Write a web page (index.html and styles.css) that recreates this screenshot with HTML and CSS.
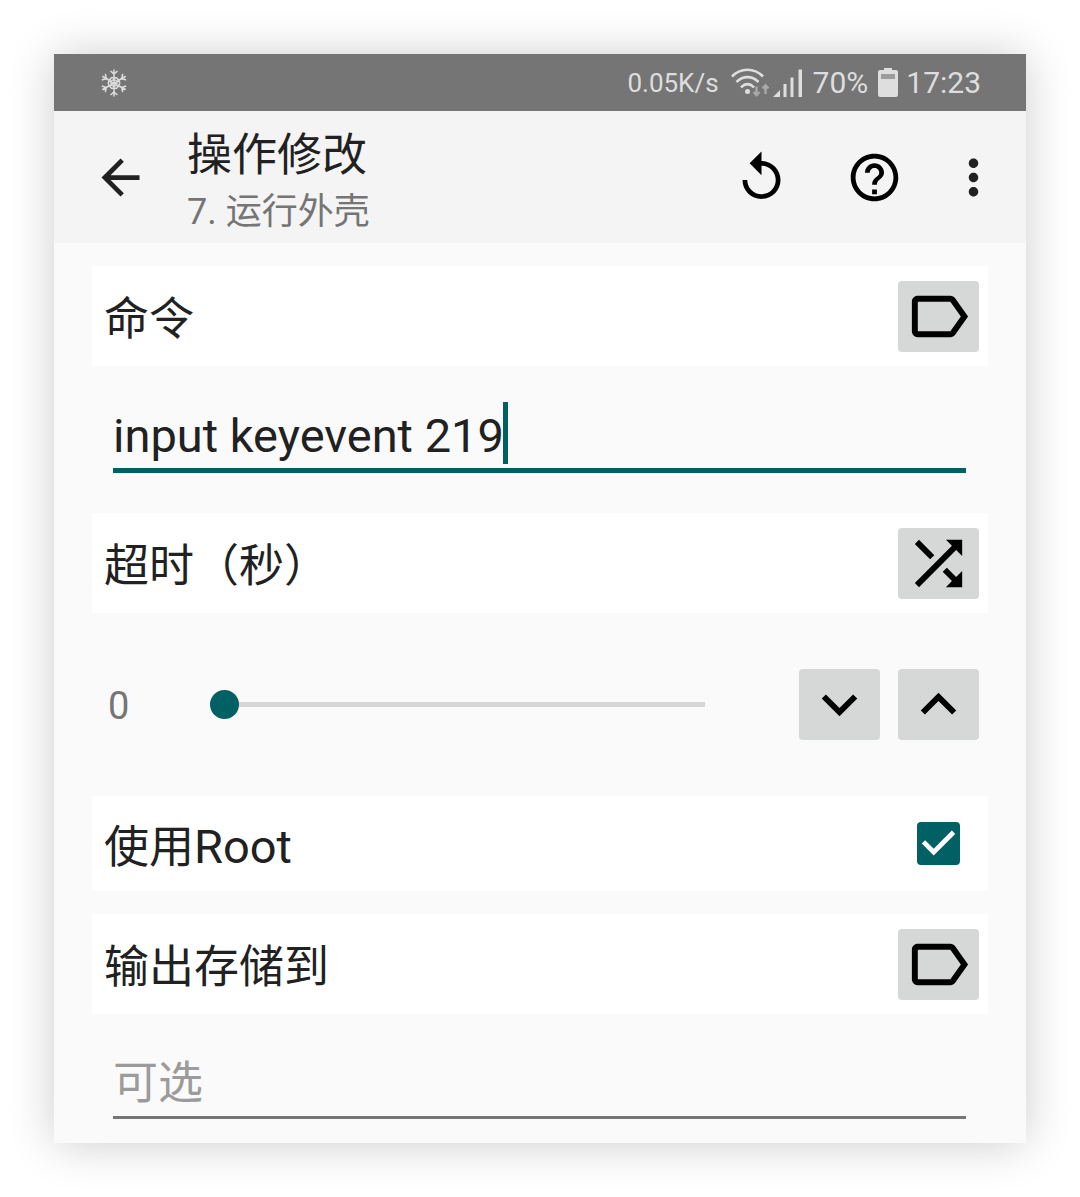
FILE: index.html
```html
<!DOCTYPE html>
<html lang="zh-CN">
<head>
<meta charset="utf-8">
<meta name="viewport" content="width=device-width, initial-scale=1">
<title>操作修改</title>
<link rel="stylesheet" href="styles.css">
</head>
<body>
<main class="screen">
  <div class="status">
    <svg class="snow" viewBox="-14 -14 28 28" aria-hidden="true">
      <defs>
        <g id="arm"><path d="M0 0V-13.500M-3.500 -12L0 -9L3.500 -12M-3 -5.200H3M-1.700 -3H1.700"/></g>
      </defs>
      <use href="#arm"/><use href="#arm" transform="rotate(60)"/><use href="#arm" transform="rotate(120)"/>
      <use href="#arm" transform="rotate(180)"/><use href="#arm" transform="rotate(240)"/><use href="#arm" transform="rotate(300)"/>
    </svg>
    <span class="speed">0.05K/s</span>
    <svg class="wifi" viewBox="0 0 38 30" aria-hidden="true">
      <g fill="none" stroke="#dedede" stroke-width="2.600">
        <path d="M1 8.500C10 -0.500 23 -0.500 32 8.500"/><path d="M5.500 14C12 7.500 21 7.500 27.500 14"/><path d="M10 19.500C14 15 19 15 23 19.500"/>
      </g>
      <circle cx="16.500" cy="23.500" r="2.500" fill="#dedede"/>
      <g fill="none" stroke="#a9a9a9" stroke-width="2.400"><path d="M25.500 18.500V27M22.500 24L25.500 27.300L28.500 24"/><path d="M34.500 26V17.500M31.500 20.500L34.500 17.200L37.500 20.500"/></g>
    </svg>
    <svg class="signal" viewBox="0 0 30 30" aria-hidden="true">
      <path fill="#dedede" d="M0 29L7 22V29ZM10.500 16H13.500V29H10.500ZM17.500 9.500H20.500V29H17.500ZM25.500 1.500H29V29H25.500Z"/>
    </svg>
    <span class="percent">70%</span>
    <svg class="battery" viewBox="0 0 20 30" aria-hidden="true">
      <path fill="#dedede" d="M6 0H14V2H18a2 2 0 0 1 2 2V27a2 2 0 0 1-2 2H2a2 2 0 0 1-2-2V4a2 2 0 0 1 2-2H6Z"/>
      <path fill="#9c9c9c" d="M3 6H17V11H3Z"/>
    </svg>
    <time class="clock">17:23</time>
  </div>

  <header class="bar">
    <button class="icon-button" type="button" aria-label="返回">
      <svg class="icon soft" viewBox="0 0 24 24"><path d="M20 11H7.830l5.590-5.590L12 4l-8 8 8 8 1.410-1.410L7.830 13H20v-2z"/></svg>
    </button>
    <div class="titles">
      <h1 class="title">操作修改</h1>
      <p class="subtitle">7. 运行外壳</p>
    </div>
    <div class="actions">
      <button class="icon-button" type="button" aria-label="还原">
        <svg class="icon" viewBox="0 0 24 24"><path d="M12 5V1L7 6l5 5V7c3.310 0 6 2.690 6 6s-2.690 6-6 6-6-2.690-6-6H4c0 4.420 3.580 8 8 8s8-3.580 8-8-3.580-8-8-8z"/></svg>
      </button>
      <button class="icon-button" type="button" aria-label="帮助">
        <svg class="icon" viewBox="0 0 24 24"><path d="M11 17h2v2h-2v-2zm1-15C6.480 2 2 6.480 2 12s4.480 10 10 10 10-4.480 10-10S17.520 2 12 2zm0 18c-4.410 0-8-3.590-8-8s3.590-8 8-8 8 3.590 8 8-3.590 8-8 8zm0-14c-2.210 0-4 1.790-4 4h2c0-1.100.900-2 2-2s2 .900 2 2c0 2-3 1.750-3 5h2c0-2.250 3-2.500 3-5 0-2.210-1.790-4-4-4z"/></svg>
      </button>
      <button class="icon-button more" type="button" aria-label="更多">
        <svg class="icon soft" viewBox="0 0 24 24"><path d="M12 8c1.100 0 2-.900 2-2s-.900-2-2-2-2 .900-2 2 .900 2 2 2zm0 2c-1.100 0-2 .900-2 2s.900 2 2 2 2-.900 2-2-.900-2-2-2zm0 6c-1.100 0-2 .900-2 2s.900 2 2 2 2-.900 2-2-.900-2-2-2z"/></svg>
      </button>
    </div>
  </header>

  <form class="form">
    <div class="row">
      <label class="label" for="command">命令</label>
      <button class="tile" type="button" aria-label="插入标签">
        <svg class="tile-icon" viewBox="0 0 24 24"><path d="M17.630 5.840C17.270 5.330 16.670 5 16 5L5 5.010C3.900 5.010 3 5.900 3 7v10c0 1.100.900 1.990 2 1.990L16 19c.670 0 1.270-.330 1.630-.840L22 12l-4.370-6.160zM16 17H5V7h11l3.550 5L16 17z"/></svg>
      </button>
    </div>
    <div class="field">
      <input class="text active" id="command" type="text" value="input keyevent 219">
      <span class="caret"></span>
    </div>

    <div class="row">
      <label class="label" for="timeout">超时（秒）</label>
      <button class="tile" type="button" aria-label="切换">
        <svg class="tile-icon" viewBox="0 0 24 24"><path d="M10.590 9.170L5.410 4 4 5.410l5.170 5.170 1.420-1.410zM14.500 4l2.040 2.040L4 18.590 5.410 20 17.960 7.460 20 9.500V4h-5.500zm.330 9.410l-1.410 1.410 3.130 3.130L14.500 20H20v-5.500l-2.040 2.040-3.130-3.130z"/></svg>
      </button>
    </div>
    <div class="slider-row">
      <output class="value" for="timeout">0</output>
      <input class="slider" id="timeout" type="range" min="0" max="100" value="0">
      <div class="steps">
        <button class="tile" type="button" aria-label="减少">
          <svg class="tile-icon" viewBox="0 0 24 24"><path d="M16.590 8.590L12 13.170 7.410 8.590 6 10l6 6 6-6z"/></svg>
        </button>
        <button class="tile" type="button" aria-label="增加">
          <svg class="tile-icon" viewBox="0 0 24 24"><path d="M12 8l-6 6 1.410 1.410L12 10.830l4.590 4.580L18 14z"/></svg>
        </button>
      </div>
    </div>

    <div class="row check-row">
      <label class="label" for="root">使用<span class="latin">Root</span></label>
      <span class="check-wrap">
        <input class="check" id="root" type="checkbox" checked>
        <svg class="tick" viewBox="3 3 18 18" aria-hidden="true"><path d="M10 17l-5-5 1.410-1.410L10 14.170l7.590-7.590L19 8l-9 9z"/></svg>
      </span>
    </div>

    <div class="row">
      <label class="label" for="output">输出存储到</label>
      <button class="tile" type="button" aria-label="选择变量">
        <svg class="tile-icon" viewBox="0 0 24 24"><path d="M17.630 5.840C17.270 5.330 16.670 5 16 5L5 5.010C3.900 5.010 3 5.900 3 7v10c0 1.100.900 1.990 2 1.990L16 19c.670 0 1.270-.330 1.630-.840L22 12l-4.370-6.160zM16 17H5V7h11l3.550 5L16 17z"/></svg>
      </button>
    </div>
    <div class="field last">
      <input class="text" id="output" type="text" placeholder="可选">
    </div>
  </form>
</main>
</body>
</html>
```
FILE: styles.css
```css
* {
  box-sizing: border-box;
}

body {
  margin: 0;
  padding: 54px;
  background: #fff;
  color: #212121;
  font-family: Roboto, "Noto Sans CJK SC", sans-serif;
}

button {
  margin: 0;
  padding: 0;
  border: 0;
  background: none;
}

svg {
  display: block;
}

.screen {
  background: #fafafa;
  box-shadow: 0 1px 44px rgba(0, 0, 0, 0.2);
}

/* Status bar */
.status {
  display: flex;
  align-items: center;
  height: 57px;
  padding: 0 45px 0 46px;
  background: #757575;
  color: #dedede;
  font-size: 30px;
  line-height: 57px;
}

.snow {
  width: 28px;
  height: 28px;
  margin-right: auto;
  fill: none;
  stroke: #dedede;
  stroke-width: 1.5;
}

.speed {
  padding-top: 2px;
  font-size: 26px;
}

.wifi {
  width: 38px;
  height: 30px;
  margin-left: 12px;
}

.signal {
  width: 30px;
  height: 30px;
  margin-left: 4px;
}

.percent {
  margin-left: 10px;
}

.battery {
  width: 20px;
  height: 30px;
  margin: 0 8px 0 10px;
}

/* App bar */
.bar {
  display: flex;
  align-items: center;
  min-height: 132px;
  padding: 0 24px 0 38px;
  background: #f4f4f4;
}

.icon-button,
.icon {
  width: 57px;
  height: 57px;
}

.icon {
  fill: #000;
}

.soft {
  fill: #212121;
}

.titles {
  flex: 1;
  margin-left: 38px;
  padding-top: 9px;
}

.title,
.subtitle {
  margin: 0;
  font-weight: 400;
}

.title {
  font-size: 45px;
  line-height: 60px;
}

.subtitle {
  color: #757575;
  font-size: 36px;
  line-height: 52px;
}

.actions {
  display: flex;
  gap: 56px;
}

.more {
  margin-left: -14px;
}

/* Settings */
.form {
  padding: 23px 38px 24px;
}

.row {
  display: flex;
  align-items: center;
  justify-content: space-between;
  min-height: 100px;
  padding: 0 9px 0 12px;
  background: #fff;
}

.label {
  padding-top: 7px;
  font-size: 45px;
  line-height: 66px;
}

.latin {
  font-size: 47px;
}

.tile {
  display: flex;
  align-items: center;
  justify-content: center;
  width: 81px;
  height: 71px;
  border-radius: 4px;
  background: #d6d7d7;
}

.tile-icon {
  width: 71px;
  height: 71px;
}

.field {
  position: relative;
  padding: 36px 22px 40px 21px;
}

.last {
  padding-bottom: 0;
}

.text {
  display: block;
  width: 100%;
  height: 69px;
  padding: 0;
  border: 0;
  border-bottom: 3px solid #767676;
  border-radius: 0;
  outline: 0;
  background: none;
  color: inherit;
  font: 45px Roboto, "Noto Sans CJK SC", sans-serif;
}

.active {
  height: 71px;
  border-bottom: 5px solid #006064;
  font-size: 47px;
}

.text::placeholder {
  color: #9b9b9b;
  opacity: 1;
}

.caret {
  position: absolute;
  top: 36px;
  left: 411px;
  width: 5px;
  height: 62px;
  background: #006064;
}

.slider-row {
  display: flex;
  align-items: center;
  height: 183px;
  padding: 0 9px 0 16px;
}

.value {
  width: 102px;
  padding-top: 2px;
  color: #757575;
  font-size: 38px;
}

.slider {
  flex: 1;
  min-width: 0;
  height: 29px;
  margin: 0 94px 0 0;
  appearance: none;
  background: linear-gradient(#d6d6d6, #d6d6d6) center / 100% 5px no-repeat;
}

.slider::-webkit-slider-thumb {
  appearance: none;
  width: 29px;
  height: 29px;
  border-radius: 50%;
  background: #006064;
}

.steps {
  display: flex;
  gap: 18px;
}

.check-row {
  min-height: 95px;
  margin-bottom: 23px;
  padding-right: 28px;
}

.check-wrap {
  position: relative;
}

.check {
  display: block;
  width: 43px;
  height: 43px;
  margin: 0;
  appearance: none;
  border: 5px solid #757575;
  border-radius: 4px;
}

.check:checked {
  border-color: #006064;
  background: #006064;
}

.tick {
  position: absolute;
  inset: 0;
  display: none;
  fill: #fff;
  pointer-events: none;
}

.check:checked + .tick {
  display: block;
}
```
